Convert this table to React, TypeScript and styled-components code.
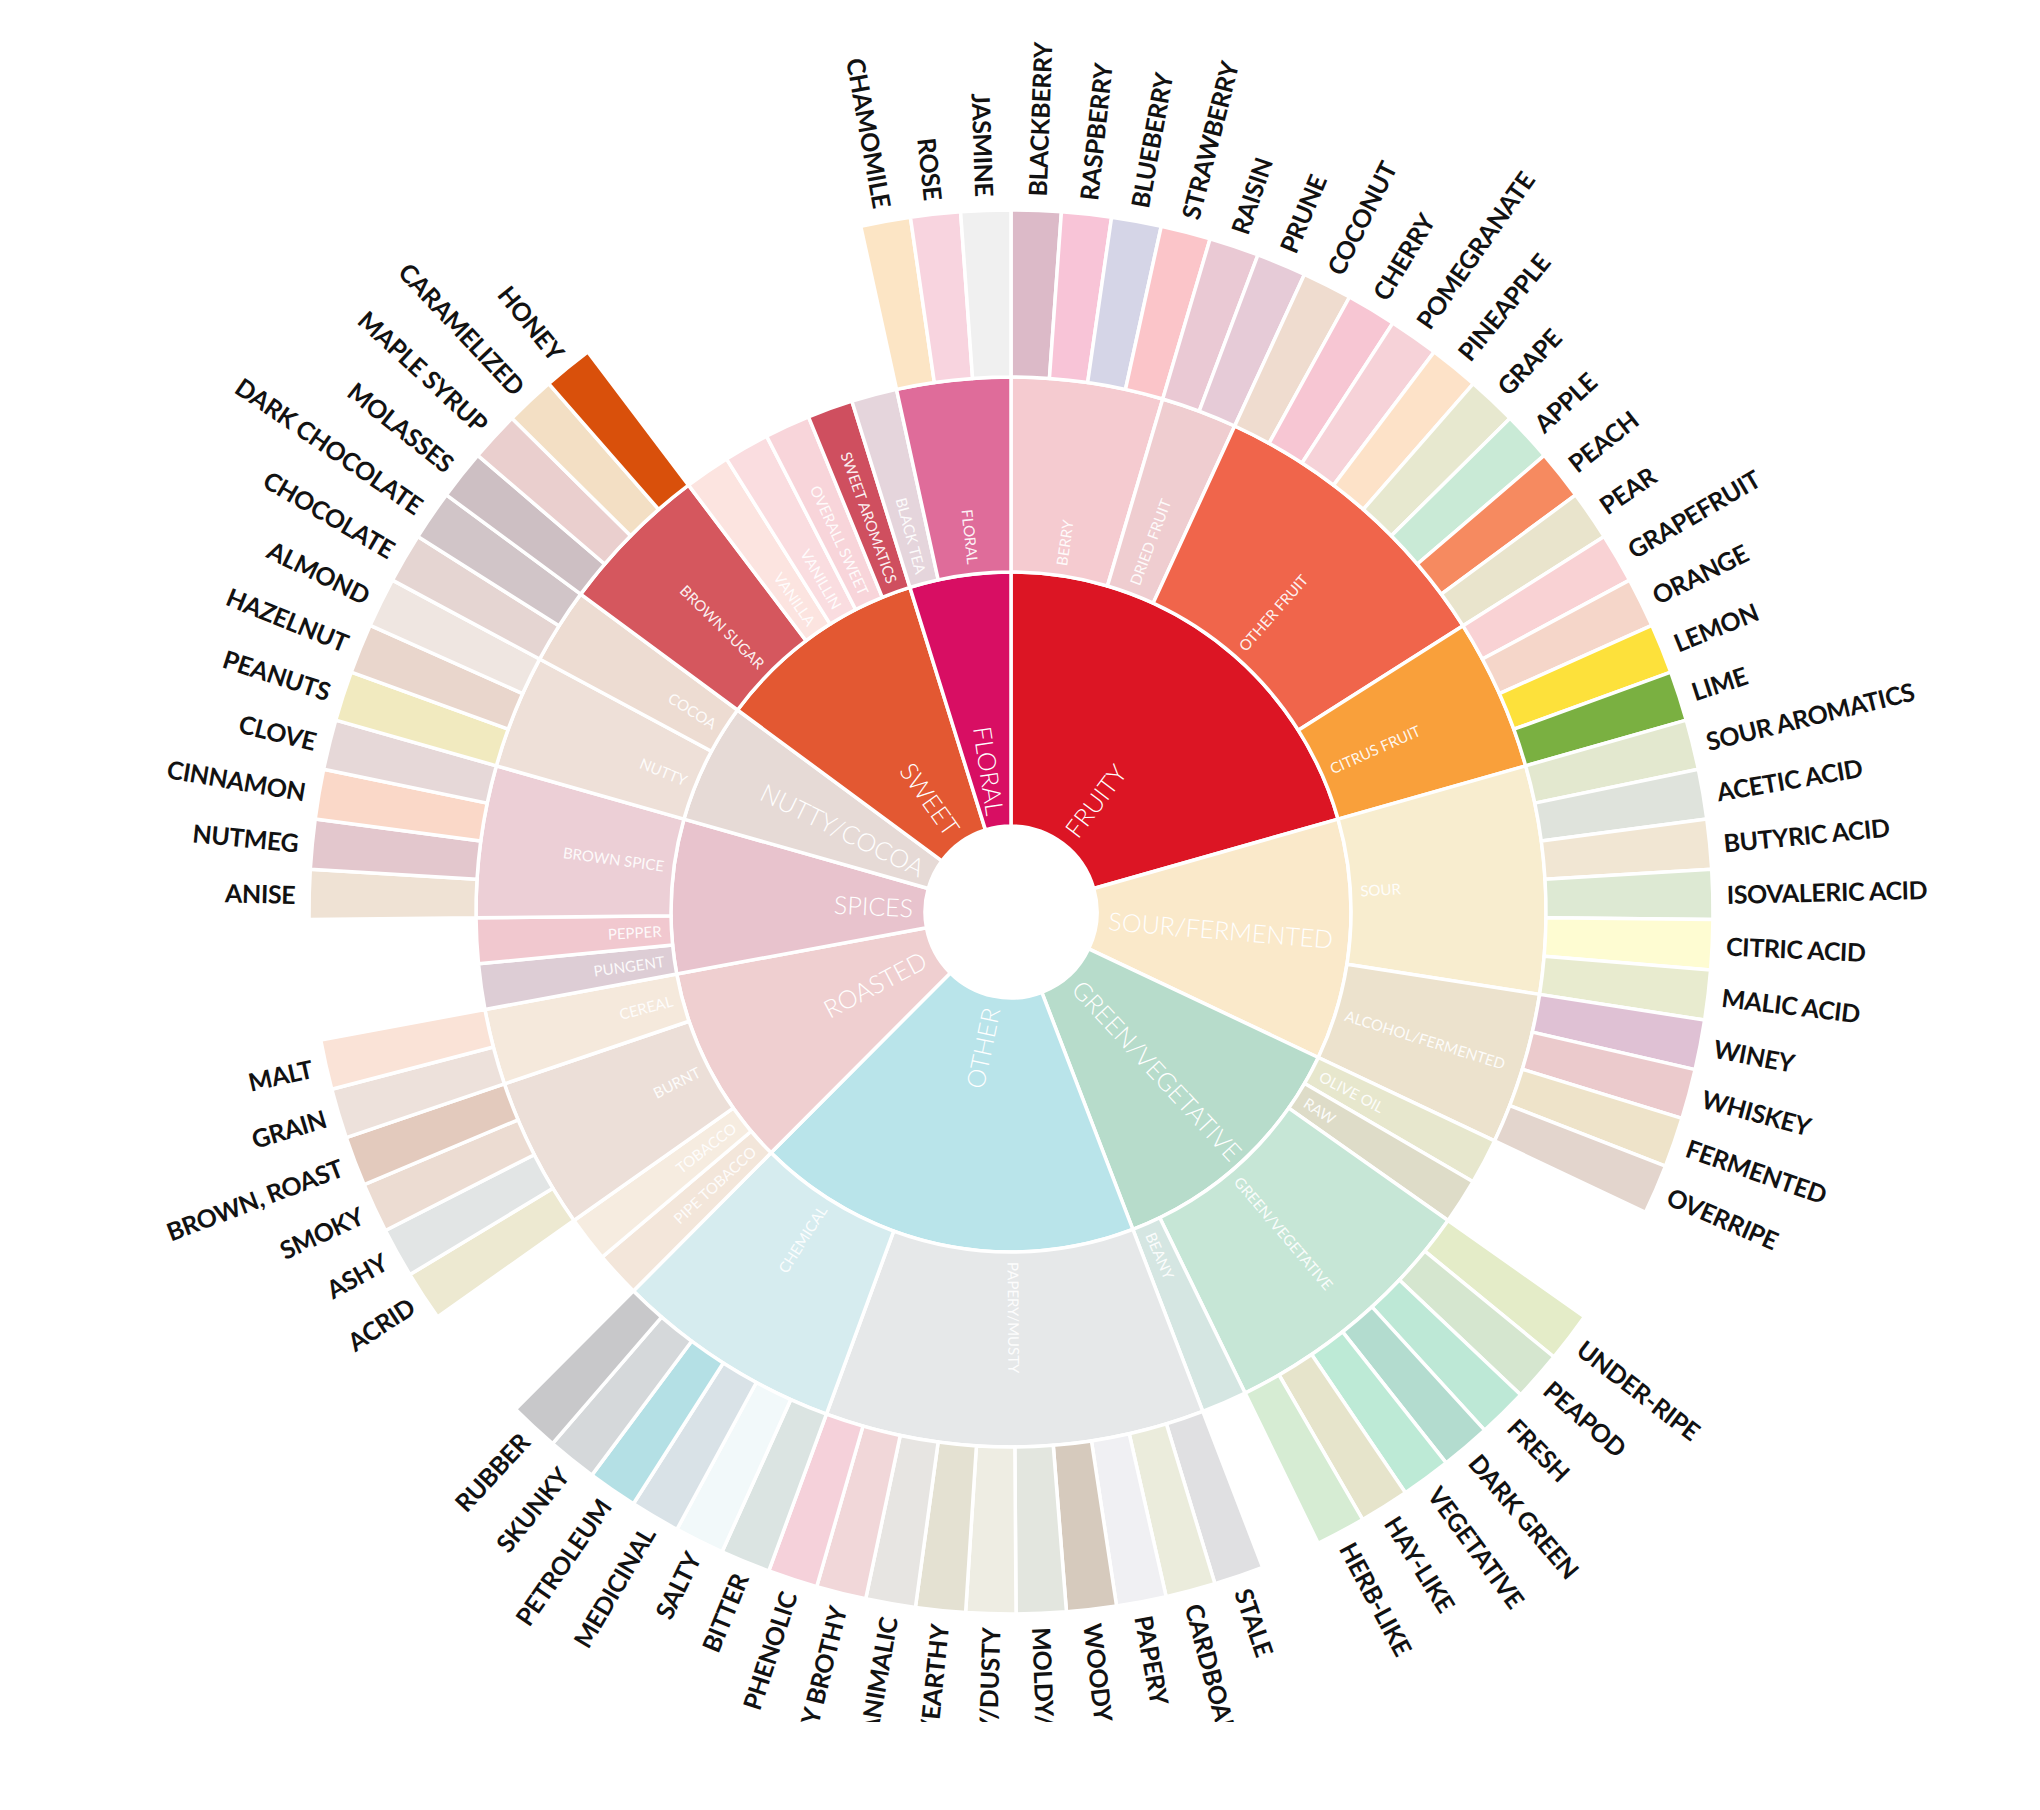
import React from "react";
import styled, { createGlobalStyle } from "styled-components";

const GlobalStyle = createGlobalStyle`
  html, body {
    margin: 0;
    padding: 0;
    background: #ffffff;
  }
  body {
    font-family: "Lato", "Liberation Sans", sans-serif;
  }
`;

const Page = styled.div`
  width: 2040px;
  height: 1810px;
  background: #ffffff;
  overflow: hidden;
`;

const Wheel = styled.svg`
  display: block;
  width: 2040px;
  height: 1722px;
`;

const Segment = styled.path`
  stroke: #ffffff;
  stroke-width: 3.5;
  stroke-linejoin: round;
`;

const Hole = styled.circle`
  fill: #ffffff;
`;

const InnerLabel = styled.text<{ $end: boolean }>`
  font-family: "Lato", "Liberation Sans", sans-serif;
  font-weight: 300;
  font-size: 25px;
  fill: #ffffff;
  dominant-baseline: central;
  text-anchor: ${(p) => (p.$end ? "end" : "start")};
`;

const MiddleLabel = styled.text<{ $end: boolean }>`
  font-family: "Lato", "Liberation Sans", sans-serif;
  font-weight: 400;
  font-size: 15px;
  fill: #ffffff;
  fill-opacity: 0.92;
  dominant-baseline: central;
  text-anchor: ${(p) => (p.$end ? "end" : "start")};
`;

const OuterLabel = styled.text<{ $end: boolean }>`
  font-family: "Lato", "Liberation Sans", sans-serif;
  font-weight: 700;
  font-size: 25px;
  letter-spacing: -0.4px;
  fill: #121212;
  dominant-baseline: central;
  text-anchor: ${(p) => (p.$end ? "end" : "start")};
`;

type FlavorNode = { name: string; color: string; children?: FlavorNode[] };

const L = (name: string, color: string): FlavorNode => ({ name, color });
const G = (name: string, color: string, children: FlavorNode[]): FlavorNode => ({
  name,
  color,
  children,
});

const wheelData: FlavorNode[] = [
  G("FRUITY", "#dc1524", [
    G("BERRY", "#f5cbd0", [
      L("BLACKBERRY", "#dcbac8"),
      L("RASPBERRY", "#f8c4d7"),
      L("BLUEBERRY", "#d5d5e7"),
      L("STRAWBERRY", "#fbc5c9"),
    ]),
    G("DRIED FRUIT", "#efcdd0", [L("RAISIN", "#eac9d4"), L("PRUNE", "#e6cbd7")]),
    G("OTHER FRUIT", "#f0654b", [
      L("COCONUT", "#efdccf"),
      L("CHERRY", "#f7c6d3"),
      L("POMEGRANATE", "#f6d2d8"),
      L("PINEAPPLE", "#fde2c8"),
      L("GRAPE", "#e7e8cf"),
      L("APPLE", "#c9ead6"),
      L("PEACH", "#f68a60"),
      L("PEAR", "#e9e4cc"),
    ]),
    G("CITRUS FRUIT", "#f9a03b", [
      L("GRAPEFRUIT", "#f9d2d4"),
      L("ORANGE", "#f5d6c9"),
      L("LEMON", "#fde13b"),
      L("LIME", "#7ab041"),
    ]),
  ]),
  G("SOUR/FERMENTED", "#fae9ca", [
    G("SOUR", "#f8edcf", [
      L("SOUR AROMATICS", "#e3e8cf"),
      L("ACETIC ACID", "#dfe3dc"),
      L("BUTYRIC ACID", "#f1e6d3"),
      L("ISOVALERIC ACID", "#dde9d3"),
      L("CITRIC ACID", "#fefcd2"),
      L("MALIC ACID", "#e8ebcf"),
    ]),
    G("ALCOHOL/FERMENTED", "#ece2cd", [
      L("WINEY", "#dfc1d4"),
      L("WHISKEY", "#ebcacc"),
      L("FERMENTED", "#eee3c9"),
      L("OVERRIPE", "#e3d5cd"),
    ]),
  ]),
  G("GREEN/VEGETATIVE", "#b7dccb", [
    L("OLIVE OIL", "#e7e7cd"),
    L("RAW", "#dedcc8"),
    G("GREEN/VEGETATIVE", "#c6e6d6", [
      L("UNDER-RIPE", "#e4ecc8"),
      L("PEAPOD", "#d5e6cf"),
      L("FRESH", "#bde8d6"),
      L("DARK GREEN", "#b3dccf"),
      L("VEGETATIVE", "#bdead6"),
      L("HAY-LIKE", "#e6e4cb"),
      L("HERB-LIKE", "#d6ecd3"),
    ]),
    L("BEANY", "#d5e6e2"),
  ]),
  G("OTHER", "#b9e4ea", [
    G("PAPERY/MUSTY", "#e6e8e9", [
      L("STALE", "#e0e0e2"),
      L("CARDBOARD", "#ebecdc"),
      L("PAPERY", "#f0f0f3"),
      L("WOODY", "#d6cabd"),
      L("MOLDY/DAMP", "#e3e6df"),
      L("MUSTY/DUSTY", "#eeede3"),
      L("MUSTY/EARTHY", "#e4e1d2"),
      L("ANIMALIC", "#e7e5e2"),
      L("MEATY BROTHY", "#f1d7d9"),
      L("PHENOLIC", "#f5d1da"),
    ]),
    G("CHEMICAL", "#d6ecef", [
      L("BITTER", "#dbe4e2"),
      L("SALTY", "#f2f9fa"),
      L("MEDICINAL", "#d9e2e7"),
      L("PETROLEUM", "#b4e0e5"),
      L("SKUNKY", "#d5d8da"),
      L("RUBBER", "#c8c8ca"),
    ]),
  ]),
  G("ROASTED", "#efcfd0", [
    L("PIPE TOBACCO", "#f3e6da"),
    L("TOBACCO", "#f6ece0"),
    G("BURNT", "#ecdfd8", [
      L("ACRID", "#ede9d1"),
      L("ASHY", "#e2e5e5"),
      L("SMOKY", "#ecdcd2"),
      L("BROWN, ROAST", "#e3cabd"),
    ]),
    G("CEREAL", "#f5e9dc", [L("GRAIN", "#ede1db"), L("MALT", "#fae3d7")]),
  ]),
  G("SPICES", "#e8c3cd", [
    L("PUNGENT", "#ddcdd5"),
    L("PEPPER", "#f1c8cf"),
    G("BROWN SPICE", "#eccfd6", [
      L("ANISE", "#efe2d4"),
      L("NUTMEG", "#e3c7cd"),
      L("CINNAMON", "#fad8c8"),
      L("CLOVE", "#e6d8d8"),
    ]),
  ]),
  G("NUTTY/COCOA", "#e6dad6", [
    G("NUTTY", "#eee0d8", [
      L("PEANUTS", "#f1eabf"),
      L("HAZELNUT", "#e9d6cc"),
      L("ALMOND", "#efe6e1"),
    ]),
    G("COCOA", "#eddcd2", [L("CHOCOLATE", "#e5d5d2"), L("DARK CHOCOLATE", "#d1c5c8")]),
  ]),
  G("SWEET", "#e35832", [
    G("BROWN SUGAR", "#d5575e", [
      L("MOLASSES", "#cdbfc3"),
      L("MAPLE SYRUP", "#eacfce"),
      L("CARAMELIZED", "#f3dfc4"),
      L("HONEY", "#d9500b"),
    ]),
    L("VANILLA", "#fce4e0"),
    L("VANILLIN", "#fadde0"),
    L("OVERALL SWEET", "#f8d5da"),
    L("SWEET AROMATICS", "#cf4f5f"),
  ]),
  G("FLORAL", "#d80e63", [
    L("BLACK TEA", "#e5d5dc"),
    G("FLORAL", "#df6c9a", [L("CHAMOMILE", "#fce5c5"), L("ROSE", "#f8d4df"), L("JASMINE", "#f0f0f0")]),
  ]),
];

const CX = 1011;
const CY = 912;
const RADII = [86, 340, 535, 702];
const LABEL_START = [98, 350, 716];

type Cell = { key: string; name: string; color: string; depth: number; a0: number; a1: number };

const weightOf = (n: FlavorNode, depth: number): number =>
  n.children ? n.children.reduce((s, c) => s + weightOf(c, depth + 1), 0) : depth === 2 ? 1 : 1.2;

const total = wheelData.reduce((s, n) => s + weightOf(n, 0), 0);
const unit = 360 / total;

const cells: Cell[] = [];
const layout = (nodes: FlavorNode[], depth: number, start: number, prefix: string) => {
  let a = start;
  nodes.forEach((n, i) => {
    const span = weightOf(n, depth) * unit;
    const key = `${prefix}-${i}`;
    cells.push({ key, name: n.name, color: n.color, depth, a0: a, a1: a + span });
    if (n.children) layout(n.children, depth + 1, a, key);
    a += span;
  });
};
layout(wheelData, 0, 0, "c");

const pt = (r: number, a: number): [number, number] => {
  const rad = (a * Math.PI) / 180;
  return [CX + r * Math.sin(rad), CY - r * Math.cos(rad)];
};

const f = (v: number) => v.toFixed(2);

const sectorPath = (a0: number, a1: number, ri: number, ro: number) => {
  const large = a1 - a0 > 180 ? 1 : 0;
  const [x0, y0] = pt(ro, a0);
  const [x1, y1] = pt(ro, a1);
  const [x2, y2] = pt(ri, a1);
  const [x3, y3] = pt(ri, a0);
  return `M${f(x0)} ${f(y0)} A${ro} ${ro} 0 ${large} 1 ${f(x1)} ${f(y1)} L${f(x2)} ${f(y2)} A${ri} ${ri} 0 ${large} 0 ${f(x3)} ${f(y3)} Z`;
};

const placeLabel = (r: number, mid: number) => {
  const [x, y] = pt(r, mid);
  const right = mid < 180;
  const rot = right ? mid - 90 : mid + 90;
  return { transform: `translate(${f(x)} ${f(y)}) rotate(${f(rot)})`, end: !right };
};

const labelKinds = [InnerLabel, MiddleLabel, OuterLabel];

export default function App() {
  return (
    <Page>
      <GlobalStyle />
      <Wheel viewBox="0 0 2040 1722" xmlns="http://www.w3.org/2000/svg">
        {cells.map((c) => (
          <Segment
            key={`s-${c.key}`}
            d={sectorPath(c.a0, c.a1, RADII[c.depth], RADII[c.depth + 1])}
            fill={c.color}
          />
        ))}
        <Hole cx={CX} cy={CY} r={RADII[0]} />
        {cells.map((c) => {
          const mid = (c.a0 + c.a1) / 2;
          const { transform, end } = placeLabel(LABEL_START[c.depth], mid);
          const Label = labelKinds[c.depth];
          return (
            <Label key={`t-${c.key}`} transform={transform} $end={end}>
              {c.name}
            </Label>
          );
        })}
      </Wheel>
    </Page>
  );
}
